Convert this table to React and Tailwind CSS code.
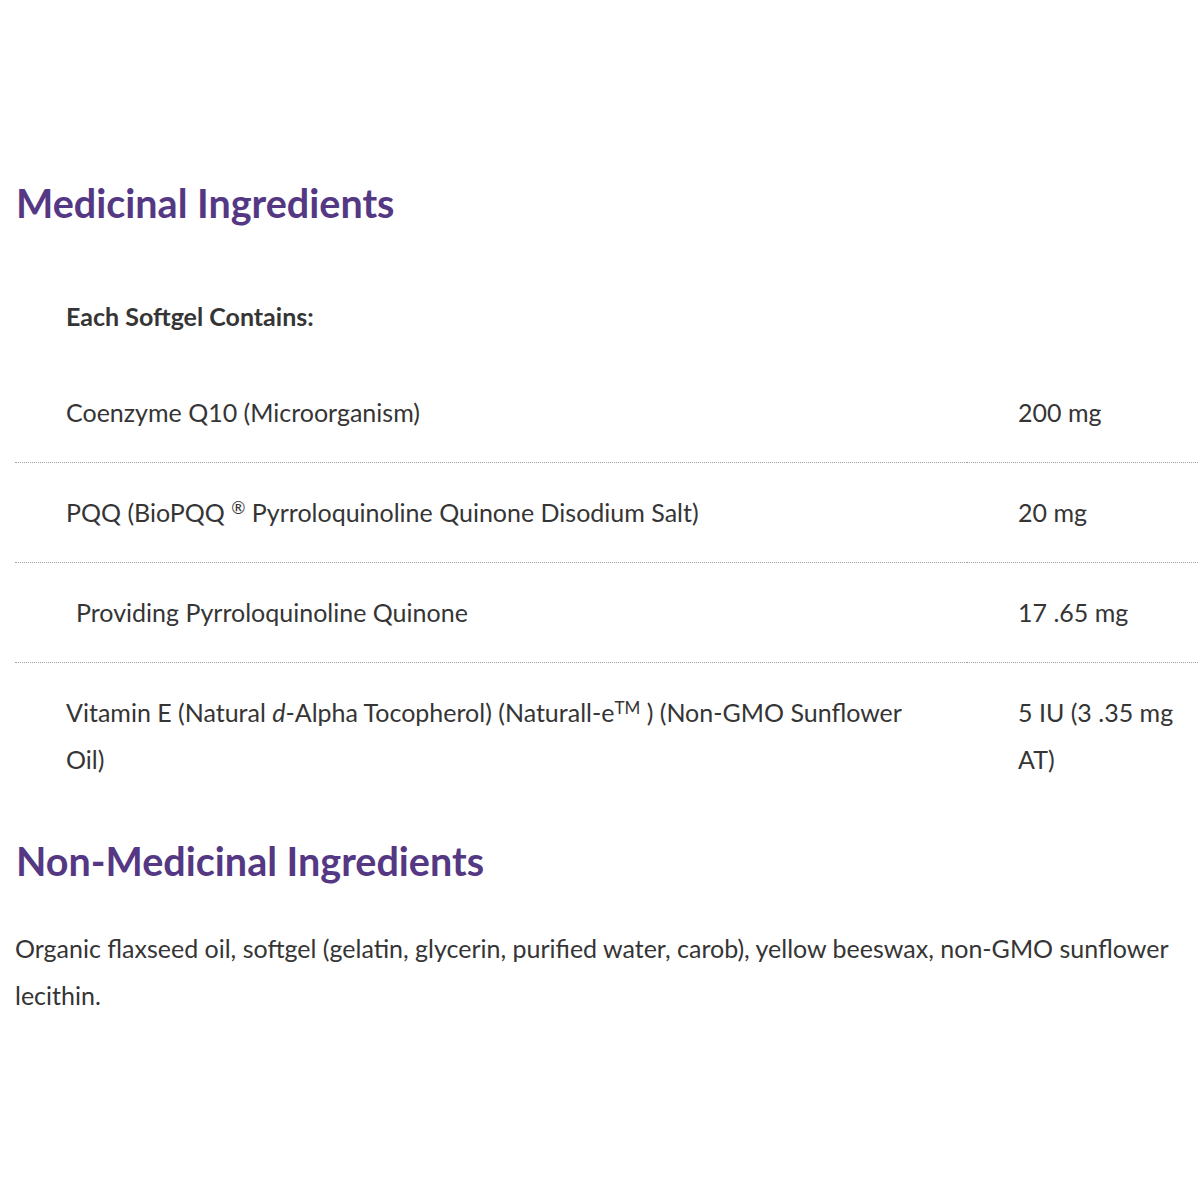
export default function App() {
  const cell = "border-b border-dotted border-[#a0a0a0] py-[26px]";
  return (
    <div className="w-[1200px] h-[1200px] bg-white text-[#353535]" style={{ fontFamily: "Lato, 'Liberation Sans', sans-serif" }}>
      <div className="pt-[177px] pl-[15px] pr-[2px]">
        <h2 className="text-[39.5px] font-bold text-[#553883] leading-[52px] pl-[1px]" style={{ fontFamily: "Lato, sans-serif" }}>
          Medicinal Ingredients
        </h2>
        <table className="w-full mt-[38px] text-[25px] leading-[47px] border-collapse">
          <tbody>
            <tr>
              <td className="pl-[51px] pt-[26px] pb-[23px] font-bold" colSpan={2}>Each Softgel Contains:</td>
            </tr>
            <tr>
              <td className={`${cell} pl-[51px] w-[952px]`}>Coenzyme Q10 (Microorganism)</td>
              <td className={`${cell} pl-[51px]`}>200 mg</td>
            </tr>
            <tr>
              <td className={`${cell} pl-[51px]`}>PQQ (BioPQQ <sup className="text-[17px]">®</sup> Pyrroloquinoline Quinone Disodium Salt)</td>
              <td className={`${cell} pl-[51px]`}>20 mg</td>
            </tr>
            <tr>
              <td className={`${cell} pl-[61px]`}>Providing Pyrroloquinoline Quinone</td>
              <td className={`${cell} pl-[51px]`}>17 .65 mg</td>
            </tr>
            <tr>
              <td className="pl-[51px] py-[26px] align-top pr-[50px]">Vitamin E (Natural <i>d</i>-Alpha Tocopherol) (Naturall-e<sup className="text-[17px]">TM</sup> ) (Non-GMO Sunflower Oil)</td>
              <td className="pl-[51px] py-[26px] align-top">5 IU (3 .35 mg AT)</td>
            </tr>
          </tbody>
        </table>
        <h2 className="text-[39.5px] font-bold text-[#553883] leading-[52px] pl-[1px] mt-[26px]" style={{ fontFamily: "Lato, sans-serif" }}>
          Non-Medicinal Ingredients
        </h2>
        <p className="text-[25px] leading-[47px] mt-[38px]">
          Organic flaxseed oil, softgel (gelatin, glycerin, purified water, carob), yellow beeswax, non-GMO sunflower lecithin.
        </p>
      </div>
    </div>
  );
}
